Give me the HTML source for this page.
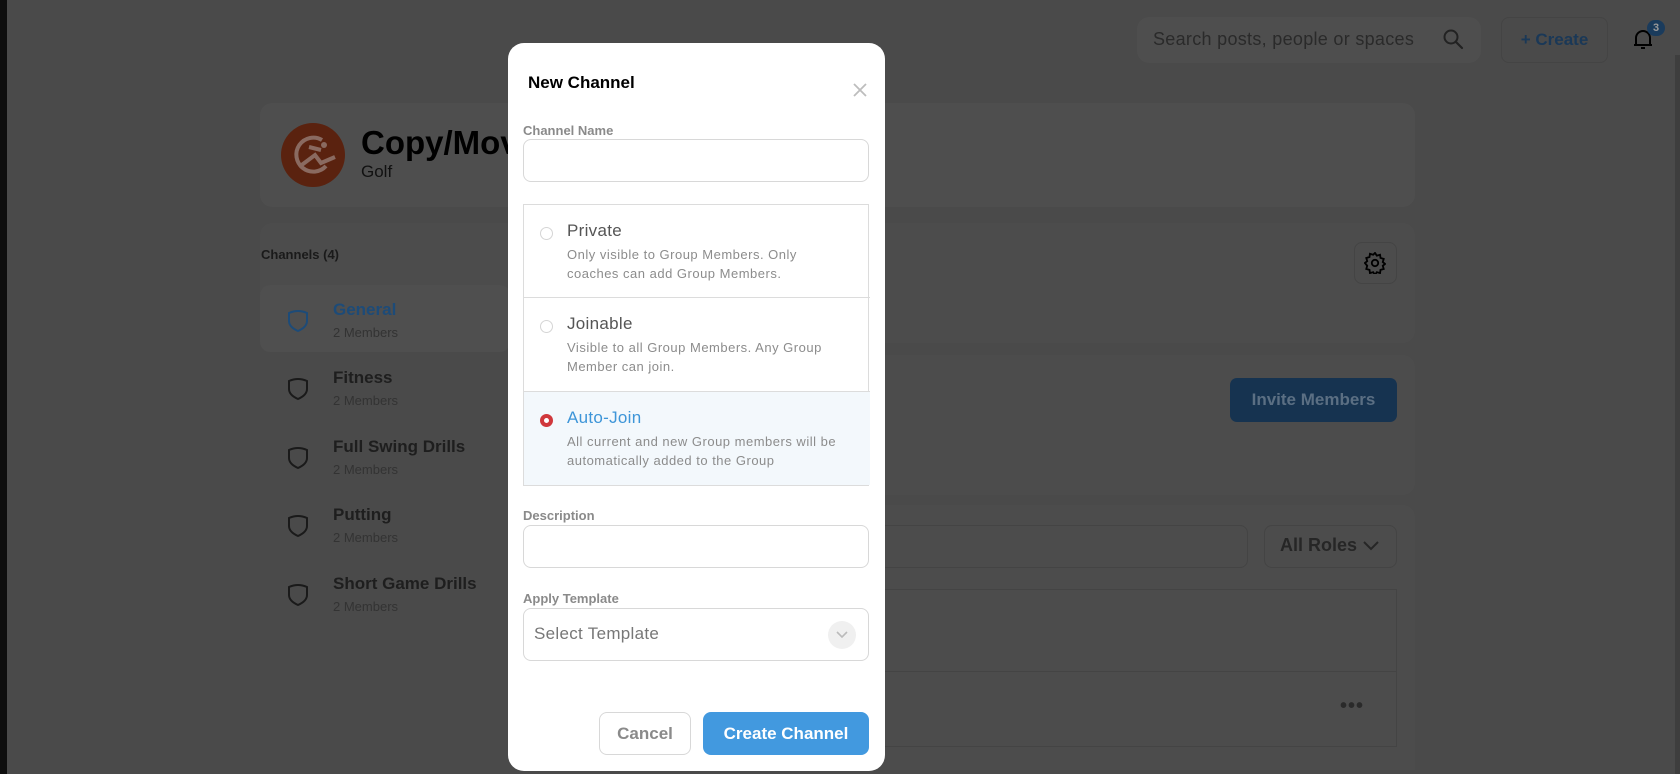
<!DOCTYPE html>
<html><head><meta charset="utf-8"><style>
*{box-sizing:border-box;margin:0;padding:0}
body{width:1680px;height:774px;overflow:hidden;background:#4a4a4a;font-family:"Liberation Sans",sans-serif;position:relative}
.a{position:absolute}
.card{position:absolute;background:#4e4e4e;border-radius:12px}
.ch .n{font-size:17px;font-weight:bold;color:#1e1e1e}
.ch .m{font-size:13px;color:#333;margin-top:5px}
.modal{position:absolute;left:508px;top:43px;width:377px;height:728px;background:#fff;border-radius:16px}
.lbl{position:absolute;left:15px;font-size:13px;font-weight:bold;color:#8a8a8a}
.inp{position:absolute;left:15px;width:346px;border:1px solid #d8d8d8;border-radius:8px;background:#fff}
.row{position:absolute;left:0;width:346px;border-bottom:1px solid #dcdcdc}
.radio{position:absolute;left:16px;width:13px;height:13px;border:1px solid #d5d5d5;border-radius:50%}
.rt{position:absolute;left:43px;font-size:17px;color:#555;letter-spacing:.3px}
.rd{position:absolute;left:43px;font-size:13px;line-height:19px;color:#8c8c8c;width:276px;letter-spacing:.5px}
</style></head><body>
<div class="a" style="left:0;top:0;width:7px;height:774px;background:#0e0e0e"></div>
<div class="a" style="left:1675px;top:55px;width:5px;height:719px;background:#3e3e3e"></div>

<!-- header -->
<div class="a" style="left:1137px;top:17px;width:344px;height:46px;background:#4e4e4e;border-radius:12px"></div>
<div class="a" style="left:1153px;top:29px;font-size:18px;color:#2a2a2a;letter-spacing:.3px">Search posts, people or spaces</div>
<svg class="a" style="left:1441px;top:27px" width="24" height="24" viewBox="0 0 24 24"><circle cx="10" cy="10" r="6.5" fill="none" stroke="#222" stroke-width="2"/><path d="M15 15l6 6" stroke="#222" stroke-width="2.2" stroke-linecap="round"/></svg>
<div class="a" style="left:1501px;top:17px;width:107px;height:46px;border:1px solid #444;border-radius:8px;text-align:center;line-height:44px;font-size:17px;font-weight:bold;color:#1a3857">+ Create</div>
<svg class="a" style="left:1632px;top:27px" width="22" height="24" viewBox="0 0 22 24"><path d="M4 18V11a7 7 0 0 1 14 0v7H4zM2 18h18M9 21h4" fill="none" stroke="#000" stroke-width="2"/></svg>
<div class="a" style="left:1647px;top:20px;width:18px;height:16px;border-radius:8px;background:#1a3b5c;color:#999;font-size:11px;font-weight:bold;text-align:center;line-height:16px">3</div>

<!-- group card -->
<div class="card" style="left:260px;top:103px;width:1155px;height:104px"></div>
<div class="a" style="left:281px;top:123px;width:64px;height:64px;border-radius:50%;background:#5a220f"></div>
<svg class="a" style="left:281px;top:123px" width="64" height="64" viewBox="0 0 64 64"><path d="M41 17a17 17 0 1 0 4 26" fill="none" stroke="#8a6a60" stroke-width="4"/><path d="M18 44l16-12 6 8 14-6M28 24l12 3" fill="none" stroke="#8a6a60" stroke-width="4"/><circle cx="43" cy="22" r="3" fill="#8a6a60"/></svg>
<div class="a" style="left:361px;top:124px;font-size:33px;font-weight:bold;color:#000">Copy/Mov</div>
<div class="a" style="left:361px;top:162px;font-size:17px;color:#111">Golf</div>

<div class="card" style="left:260px;top:223px;width:1155px;height:120px;background:#4c4c4c"></div>
<div class="card" style="left:260px;top:285px;width:250px;height:67px;border-radius:10px;background:#4f4f4f"></div>
<div class="a" style="left:261px;top:247px;font-size:13px;font-weight:bold;color:#1a1a1a">Channels (4)</div>

<div class="ch">
<div class="a" style="left:333px;top:300px"><div class="n" style="color:#1d4b78">General</div><div class="m">2 Members</div></div>
<div class="a" style="left:333px;top:368px"><div class="n">Fitness</div><div class="m">2 Members</div></div>
<div class="a" style="left:333px;top:437px"><div class="n">Full Swing Drills</div><div class="m">2 Members</div></div>
<div class="a" style="left:333px;top:505px"><div class="n">Putting</div><div class="m">2 Members</div></div>
<div class="a" style="left:333px;top:574px"><div class="n">Short Game Drills</div><div class="m">2 Members</div></div>
</div>
<svg class="a" style="left:287px;top:309px" width="22" height="24" viewBox="0 0 22 24"><path d="M2 4q9-4 18 0v8q0 6-9 10q-9-4-9-10z" fill="none" stroke="#1d4b78" stroke-width="2"/></svg>
<svg class="a" style="left:287px;top:377px" width="22" height="24" viewBox="0 0 22 24"><path d="M2 4q9-4 18 0v8q0 6-9 10q-9-4-9-10z" fill="none" stroke="#1a1a1a" stroke-width="2"/></svg>
<svg class="a" style="left:287px;top:446px" width="22" height="24" viewBox="0 0 22 24"><path d="M2 4q9-4 18 0v8q0 6-9 10q-9-4-9-10z" fill="none" stroke="#1a1a1a" stroke-width="2"/></svg>
<svg class="a" style="left:287px;top:514px" width="22" height="24" viewBox="0 0 22 24"><path d="M2 4q9-4 18 0v8q0 6-9 10q-9-4-9-10z" fill="none" stroke="#1a1a1a" stroke-width="2"/></svg>
<svg class="a" style="left:287px;top:583px" width="22" height="24" viewBox="0 0 22 24"><path d="M2 4q9-4 18 0v8q0 6-9 10q-9-4-9-10z" fill="none" stroke="#1a1a1a" stroke-width="2"/></svg>

<!-- right panels -->
<div class="a" style="left:1354px;top:242px;width:43px;height:42px;border:1px solid #444;border-radius:8px"></div>
<svg class="a" style="left:1364px;top:252px" width="22" height="22" viewBox="0 0 24 24"><path d="M12 2l2 3 3.5-1 .5 3.5 3.5 1-1 3.5 2.5 2-2.5 2 1 3.5-3.5 1-.5 3.5-3.5-1-2 3-2-3-3.5 1-.5-3.5-3.5-1 1-3.5L1 13l2.5-2-1-3.5 3.5-1L6.5 3 10 4z" fill="none" stroke="#000" stroke-width="2" transform="translate(0,-1)"/><circle cx="12" cy="12" r="3.5" fill="none" stroke="#000" stroke-width="2"/></svg>
<div class="card" style="left:880px;top:355px;width:535px;height:140px;background:#4c4c4c;border-radius:0 12px 12px 0"></div>
<div class="a" style="left:1230px;top:378px;width:167px;height:44px;background:#163350;border-radius:7px;color:#5b6f83;font-size:17px;font-weight:bold;text-align:center;line-height:44px">Invite Members</div>
<div class="card" style="left:880px;top:505px;width:535px;height:265px;background:#4c4c4c;border-radius:0 12px 0 0"></div>
<div class="a" style="left:870px;top:525px;width:378px;height:43px;border:1px solid #444;border-radius:8px"></div>
<div class="a" style="left:1264px;top:525px;width:133px;height:43px;border:1px solid #444;border-radius:8px"></div>
<div class="a" style="left:1280px;top:535px;font-size:18px;font-weight:bold;color:#262626">All Roles</div>
<svg class="a" style="left:1362px;top:539px" width="18" height="14" viewBox="0 0 18 14"><path d="M2 3l7 7 7-7" fill="none" stroke="#262626" stroke-width="2"/></svg>
<div class="a" style="left:870px;top:589px;width:527px;height:158px;border:1px solid #444"></div>
<div class="a" style="left:870px;top:671px;width:527px;height:1px;background:#444"></div>
<div class="a" style="left:1340px;top:695px;font-size:20px;font-weight:bold;color:#2a2a2a;letter-spacing:1px">•••</div>

<!-- modal -->
<div class="modal">
 <div class="a" style="left:20px;top:30px;font-size:17px;font-weight:bold;color:#000">New Channel</div>
 <svg class="a" style="left:344px;top:39px" width="16" height="16" viewBox="0 0 16 16"><path d="M2 2l12 12M14 2L2 14" stroke="#bdbdbd" stroke-width="1.8"/></svg>
 <div class="lbl" style="top:80px">Channel Name</div>
 <div class="inp" style="top:96px;height:43px"></div>
 <div class="a" style="left:15px;top:161px;width:346px;height:282px;border:1px solid #dcdcdc">
  <div class="row" style="top:0;height:93px">
   <div class="radio" style="top:22px"></div>
   <div class="rt" style="top:16px">Private</div>
   <div class="rd" style="top:40px">Only visible to Group Members. Only coaches can add Group Members.</div>
  </div>
  <div class="row" style="top:93px;height:94px">
   <div class="radio" style="top:22px"></div>
   <div class="rt" style="top:16px">Joinable</div>
   <div class="rd" style="top:40px">Visible to all Group Members. Any Group Member can join.</div>
  </div>
  <div class="row" style="top:187px;height:93px;background:#f3f8fc;border-bottom:none">
   <div class="radio" style="top:22px;border:4px solid #d0383c;background:#fff"></div>
   <div class="rt" style="top:16px;color:#3d95d8">Auto-Join</div>
   <div class="rd" style="top:40px">All current and new Group members will be automatically added to the Group</div>
  </div>
 </div>
 <div class="lbl" style="top:465px">Description</div>
 <div class="inp" style="top:482px;height:43px"></div>
 <div class="lbl" style="top:548px">Apply Template</div>
 <div class="inp" style="top:565px;height:53px"></div>
 <div class="a" style="left:26px;top:581px;font-size:17px;color:#777;letter-spacing:.3px">Select Template</div>
 <div class="a" style="left:320px;top:578px;width:28px;height:28px;border-radius:50%;background:#f0f0f0"></div>
 <svg class="a" style="left:327px;top:587px" width="14" height="10" viewBox="0 0 14 10"><path d="M2 2l5 5 5-5" fill="none" stroke="#bbb" stroke-width="1.6"/></svg>
 <div class="a" style="left:91px;top:669px;width:92px;height:43px;border:1px solid #d8d8d8;border-radius:8px;text-align:center;line-height:41px;font-size:17px;font-weight:bold;color:#8a8a8a">Cancel</div>
 <div class="a" style="left:195px;top:669px;width:166px;height:43px;background:#4299df;border-radius:8px;text-align:center;line-height:43px;font-size:17px;font-weight:bold;color:#fff">Create Channel</div>
</div>
</body></html>
